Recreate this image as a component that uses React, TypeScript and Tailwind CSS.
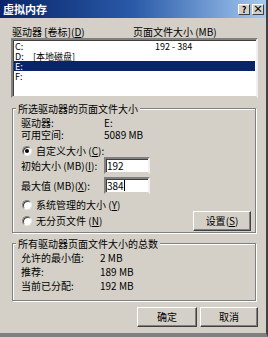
import React from "react";

const Mn = ({ k }: { k: string }) => (
  <span>
    (<span className="underline">{k}</span>)
  </span>
);

const Radio = ({ checked }: { checked?: boolean }) => (
  <span className="w-[10px] h-[10px] rounded-full bg-white border border-t-[#808080] border-l-[#808080] border-r-[#e8e8e8] border-b-[#e8e8e8] shadow-[inset_1px_1px_0_#404040] flex items-center justify-center shrink-0">
    {checked && <span className="w-[4px] h-[4px] rounded-full bg-black" />}
  </span>
);

const GroupBox = ({
  title,
  className,
  children,
}: {
  title: string;
  className: string;
  children: React.ReactNode;
}) => (
  <div
    className={`relative ml-[1px] w-[244px] border border-[#808080] shadow-[inset_1px_1px_0_#fff,1px_1px_0_#fff] ${className}`}
  >
    <span className="absolute left-[3px] top-[-6px] px-[2px] bg-[#d4d0c8] leading-[11px]">
      {title}
    </span>
    {children}
  </div>
);

const Button = ({ children, className }: { children: React.ReactNode; className: string }) => (
  <button
    className={`h-[20px] bg-[#d4d0c8] border border-t-white border-l-white border-r-[#404040] border-b-[#404040] shadow-[inset_-1px_-1px_0_#808080] flex items-center justify-center leading-none ${className}`}
  >
    {children}
  </button>
);

const Input = ({ value, caret }: { value: string; caret?: boolean }) => (
  <div className="w-[46px] h-[17px] bg-white border-2 border-t-[#808080] border-l-[#808080] border-r-[#f0f0f0] border-b-[#d4d0c8] shadow-[inset_1px_1px_0_#404040] flex items-center pl-[1px] leading-none">
    <span>{value}</span>
    {caret && <span className="w-[1px] h-[11px] bg-black" />}
  </div>
);

export default function App() {
  const drives = [
    { d: "C:", label: "", size: "192 - 384" },
    { d: "D:", label: "[本地磁盘]", size: "" },
    { d: "E:", label: "", size: "", sel: true },
    { d: "F:", label: "", size: "" },
  ];

  return (
    <div className="w-[268px] h-[337px] bg-[#d4d0c8] overflow-hidden flex flex-col font-['Noto_Sans_CJK_SC',sans-serif] text-[10px] text-black border-r-2 border-b-[4px] border-r-[#404040] border-b-[#808080]">
      {/* title bar */}
      <div className="h-[18px] shrink-0 flex items-center bg-gradient-to-r from-[#0a246a] via-[#2a5aa8] to-[#a6caf0] pl-[3px] pr-[2px]">
        <span className="text-white font-bold text-[11px] leading-none">虚拟内存</span>
        <div className="ml-auto flex gap-[2px]">
          <span className="w-[12px] h-[11px] bg-[#d4d0c8] border border-t-white border-l-white border-r-[#404040] border-b-[#404040] flex items-center justify-center text-[9px] font-bold leading-none">
            ?
          </span>
          <span className="w-[12px] h-[11px] bg-[#d4d0c8] border border-t-white border-l-white border-r-[#404040] border-b-[#404040] flex items-center justify-center text-[10px] font-bold leading-none">
            ×
          </span>
        </div>
      </div>

      <div className="flex flex-col pl-[11px]">
        {/* list header */}
        <div className="mt-[9px] h-[10px] flex items-center leading-none">
          <span className="w-[122px] pl-[1px]">
            驱动器 [卷标]<Mn k="D" />
          </span>
          <span>页面文件大小 (MB)</span>
        </div>

        {/* list */}
        <div className="mt-[1px] w-[247px] h-[60px] bg-white border-2 border-t-[#808080] border-l-[#808080] border-r-[#f0f0f0] border-b-[#d4d0c8] shadow-[inset_1px_1px_0_#404040] pt-[1px] pl-[1px] pr-[1px] text-[9px]">
          {drives.map((r) => (
            <div
              key={r.d}
              className={`h-[10px] flex items-center leading-[9px] ${r.sel ? "bg-[#0a246a] text-white" : ""}`}
            >
              <span className="w-[19px] pl-[1px]">{r.d}</span>
              <span className="w-[122px]">{r.label}</span>
              <span>{r.size}</span>
            </div>
          ))}
        </div>

        {/* selected drive */}
        <GroupBox title="所选驱动器的页面文件大小" className="mt-[10px] h-[125px] flex flex-col pt-[8px] pl-[8px] pr-[4px]">
          <div className="h-[12px] flex items-center leading-none">
            <span className="w-[83px]">驱动器:</span>
            <span>E:</span>
          </div>
          <div className="h-[12px] flex items-center leading-none">
            <span className="w-[83px]">可用空间:</span>
            <span>5089 MB</span>
          </div>
          <div className="mt-[4px] h-[12px] flex items-center gap-[4px] leading-none pl-[1px]">
            <Radio checked />
            <span>
              自定义大小 <Mn k="C" />:
            </span>
          </div>
          <div className="h-[17px] flex items-center leading-none">
            <span className="w-[83px]">
              初始大小 (MB)<Mn k="I" />:
            </span>
            <Input value="192" />
          </div>
          <div className="mt-[3px] h-[17px] flex items-center leading-none">
            <span className="w-[83px]">
              最大值 (MB)<Mn k="X" />:
            </span>
            <Input value="384" caret />
          </div>
          <div className="mt-[5px] h-[12px] flex items-center gap-[4px] leading-none pl-[1px]">
            <Radio />
            <span>
              系统管理的大小 <Mn k="Y" />
            </span>
          </div>
          <div className="mt-[1px] h-[17px] flex items-center leading-none pl-[1px]">
            <Radio />
            <span className="ml-[4px]">
              无分页文件 <Mn k="N" />
            </span>
            <Button className="ml-auto w-[58px] h-[17px]">
              设置<Mn k="S" />
            </Button>
          </div>
        </GroupBox>

        {/* totals */}
        <GroupBox title="所有驱动器页面文件大小的总数" className="mt-[10px] h-[58px] flex flex-col pt-[7px] pl-[8px]">
          <div className="h-[14px] flex items-center leading-none">
            <span className="w-[79px]">允许的最小值:</span>
            <span>2 MB</span>
          </div>
          <div className="h-[14px] flex items-center leading-none">
            <span className="w-[79px]">推荐:</span>
            <span>189 MB</span>
          </div>
          <div className="h-[14px] flex items-center leading-none">
            <span className="w-[79px]">当前已分配:</span>
            <span>192 MB</span>
          </div>
        </GroupBox>

        {/* dialog buttons */}
        <div className="mt-[6px] w-[247px] flex justify-end gap-[3px]">
          <Button className="w-[60px]">确定</Button>
          <Button className="w-[58px]">取消</Button>
        </div>
      </div>
    </div>
  );
}
